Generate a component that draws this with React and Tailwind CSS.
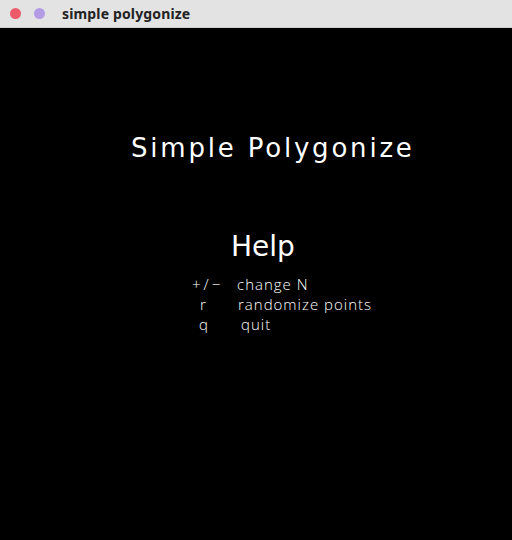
import React from 'react';

const rows = [
  { key: '+/−', keyClass: 'pl-0 tracking-[3px]', label: 'change N', labelClass: 'pl-0' },
  { key: 'r', keyClass: 'pl-[8px]', label: 'randomize points', labelClass: 'pl-[1px]' },
  { key: 'q', keyClass: 'pl-[7px]', label: 'quit', labelClass: 'pl-[4px]' },
];

export default function App() {
  return (
    <div className="w-[512px] h-[540px] bg-black flex flex-col overflow-hidden">
      {/* window title bar */}
      <div className="h-[28px] bg-[#e3e3e3] border-b border-[#cfcfcf] flex items-center shrink-0">
        <span className="ml-[10px] w-[11px] h-[11px] rounded-full bg-[#ec5a6b]" />
        <span className="ml-[13px] w-[11px] h-[11px] rounded-full bg-[#b49be6]" />
        <span
          className="ml-[17px] text-[14px] font-bold text-[#222] leading-none tracking-[0.15px]"
          style={{ fontFamily: '"Noto Sans", "DejaVu Sans", sans-serif' }}
        >
          simple polygonize
        </span>
      </div>

      {/* canvas */}
      <div
        className="flex-1 text-white"
        style={{ fontFamily: '"DejaVu Sans", "Liberation Sans", sans-serif' }}
      >
        <div className="pt-[102px] pl-[131px] text-[26px] leading-[36px] tracking-[2.8px]">
          Simple Polygonize
        </div>
        <div className="pt-[62px] pl-[231px] text-[28px] leading-[38px]">Help</div>
        <div
          className="pt-[8px] pl-[192px] text-[15px] leading-[20px] font-light tracking-[1px]"
          style={{ fontFamily: '"Open Sans", "DejaVu Sans", sans-serif' }}
        >
          {rows.map((r) => (
            <div key={r.label} className="flex">
              <span className={`${r.keyClass} w-[45px] shrink-0`}>{r.key}</span>
              <span className={r.labelClass}>{r.label}</span>
            </div>
          ))}
        </div>
      </div>
    </div>
  );
}
